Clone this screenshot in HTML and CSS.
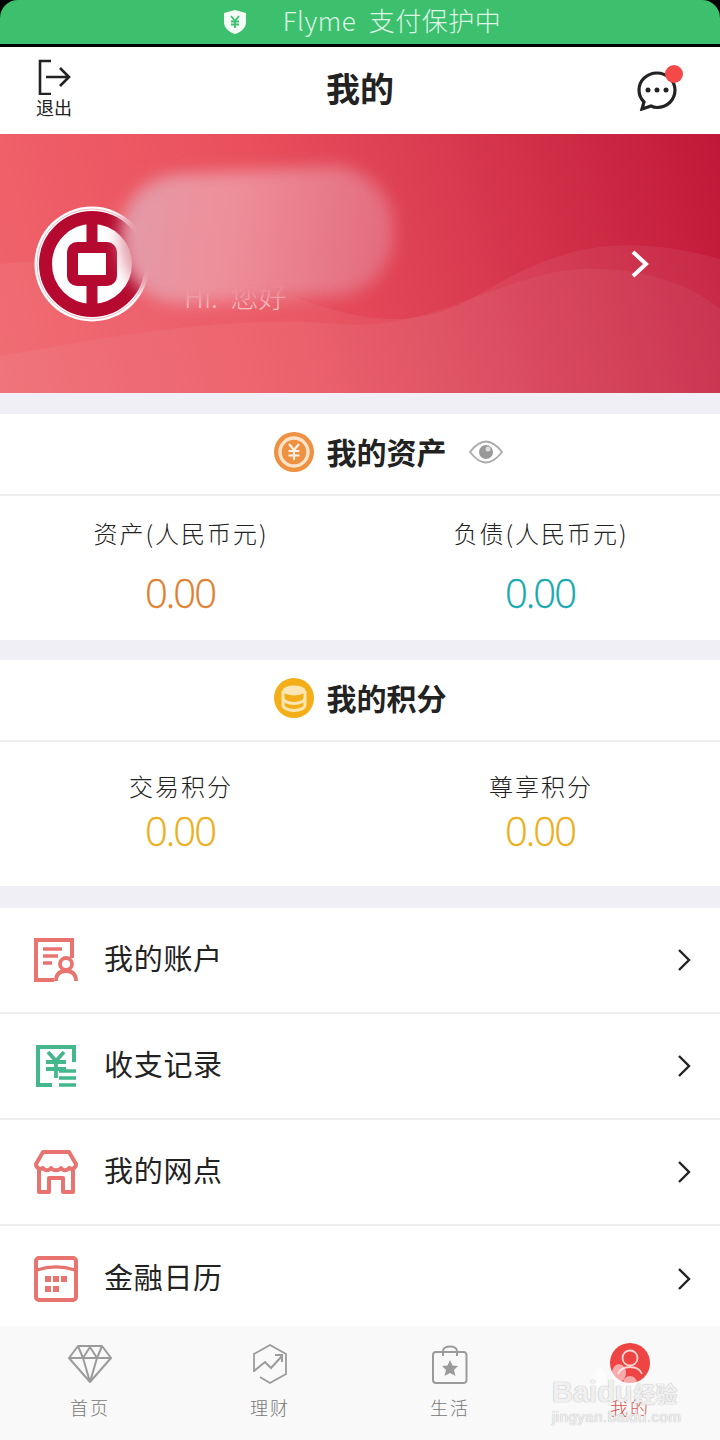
FILE: index.html
```html
<!DOCTYPE html>
<html lang="zh-CN">
<head>
<meta charset="UTF-8">
<title>我的</title>
<link rel="stylesheet" href="styles.css">
</head>
<body>
    <div class="page">
        <div class="pay-bar">
            <svg class="pay-shield" width="24" height="26" viewBox="0 0 24 26">
                <path d="M12 1 L23 4 V13 C23 19 18 23 12 25 C6 23 1 19 1 13 V4 Z" fill="#f4fbf6"/>
                <path d="M8 7 L12 12 L16 7 M12 12 V19 M8 12.5 H16 M8 15.5 H16" fill="none" stroke="#3cc06e" stroke-width="1.8"/>
            </svg>
            <span class="pay-text">Flyme&nbsp; 支付保护中</span>
        </div>

        <header class="top-bar">
            <div class="logout">
                <svg width="34" height="36" viewBox="0 0 34 36">
                    <path d="M14 2 H3 V35 H14" fill="none" stroke="#222" stroke-width="2.6"/>
                    <path d="M9 18 H31 M23 9 L32 18 L23 27" fill="none" stroke="#222" stroke-width="2.6"/>
                </svg>
                <span>退出</span>
            </div>
            <h1>我的</h1>
            <div class="msg">
                <svg width="40" height="42" viewBox="0 0 40 42">
                    <path d="M20 4 C9.500 4 2 12 2 21 C2 26 4 30 7 33 L5 40 L14 37 C16 38 18 38.500 20 38.500 C30 38.500 38 31 38 21 C38 12 30 4 20 4 Z" fill="none" stroke="#222" stroke-width="3.200"/>
                    <circle cx="11" cy="21" r="2.500" fill="#222"/>
                    <circle cx="20" cy="21" r="2.500" fill="#222"/>
                    <circle cx="29" cy="21" r="2.500" fill="#222"/>
                </svg>
                <i class="dot"></i>
            </div>
        </header>

        <section class="banner">
            <svg class="waves" width="720" height="259" viewBox="0 0 720 259" preserveAspectRatio="none">
                <path d="M0 130 C120 118 220 135 300 165 C370 190 420 195 480 160 C550 118 610 95 720 125 V259 H0 Z" fill="#fff" opacity="0.06"/>
                <path d="M0 222 C100 205 220 180 340 190 C430 198 500 140 580 135 C640 132 690 150 720 175 V259 H0 Z" fill="#fff" opacity="0.05"/>
            </svg>
            <svg class="logo" width="116" height="116" viewBox="0 0 116 116">
                <circle cx="58" cy="58" r="57.500" fill="#fff"/>
                <circle cx="58" cy="58" r="55" fill="none" stroke="#f3b8c0" stroke-width="1"/>
                <circle cx="58" cy="58" r="46.500" fill="none" stroke="#b5092f" stroke-width="13"/>
                <rect x="52.500" y="12" width="11" height="92" fill="#b5092f"/>
                <rect x="33" y="36" width="50" height="44" rx="10" fill="#b5092f"/>
                <rect x="44" y="47" width="28" height="22" fill="#fff"/>
            </svg>
            <span class="hello">Hi.&nbsp; 您好</span>
            <svg class="banner-arrow" width="20" height="30" viewBox="0 0 20 30">
                <path d="M3 3 L16 15 L3 27" fill="none" stroke="#fff" stroke-width="4"/>
            </svg>
            <div class="smudge"></div>
        </section>

        <section class="card">
            <div class="card-head">
                <svg width="40" height="40" viewBox="0 0 40 40">
                    <circle cx="20" cy="20" r="20" fill="#ee9140"/>
                    <circle cx="20" cy="20" r="14" fill="none" stroke="#fbe3cc" stroke-width="3.400"/>
                    <path d="M15 12 L20 18 L25 12 M20 18 V28 M14.500 19 H25.500 M14.500 23.500 H25.500" fill="none" stroke="#fdf3e9" stroke-width="2.200"/>
                </svg>
                <h2>我的资产</h2>
                <svg class="eye" width="34" height="24" viewBox="0 0 34 24">
                    <path d="M1 12 C8 3 13 1.500 17 1.500 C21 1.500 26 3 33 12 C26 21 21 22.500 17 22.500 C13 22.500 8 21 1 12 Z" fill="none" stroke="#aaa" stroke-width="1.800"/>
                    <circle cx="17" cy="12" r="7" fill="#999"/>
                    <circle cx="19" cy="9" r="2.500" fill="#ddd"/>
                </svg>
            </div>
            <div class="stats stats-assets">
                <div class="stat">
                    <span class="stat-label">资产(人民币元)</span>
                    <span class="stat-num orange">0.00</span>
                </div>
                <div class="stat">
                    <span class="stat-label">负债(人民币元)</span>
                    <span class="stat-num teal">0.00</span>
                </div>
            </div>
        </section>

        <section class="card">
            <div class="card-head">
                <svg width="40" height="40" viewBox="0 0 40 40">
                    <circle cx="20" cy="20" r="20" fill="#f4ae18"/>
                    <ellipse cx="20" cy="12.500" rx="11.500" ry="5" fill="#fbe6b4"/>
                    <path d="M9 13 V27 C9 30 14 32.500 20 32.500 C26 32.500 31 30 31 27 V13" fill="none" stroke="#fbe6b4" stroke-width="3"/>
                    <path d="M9 20 C9 23 14 25.500 20 25.500 C26 25.500 31 23 31 20" fill="none" stroke="#fbe6b4" stroke-width="3"/>
                </svg>
                <h2>我的积分</h2>
            </div>
            <div class="stats stats-points">
                <div class="stat">
                    <span class="stat-label">交易积分</span>
                    <span class="stat-num yellow">0.00</span>
                </div>
                <div class="stat">
                    <span class="stat-label">尊享积分</span>
                    <span class="stat-num yellow">0.00</span>
                </div>
            </div>
        </section>

        <ul class="menu">
            <li class="menu-row">
                <svg width="44" height="44" viewBox="0 0 44 44">
                    <path d="M20 42 H2 V2 H38 V20" fill="none" stroke="#e8736f" stroke-width="4"/>
                    <path d="M9 11 H28 M9 18 H24 M9 25 H18" fill="none" stroke="#e8736f" stroke-width="3.600"/>
                    <circle cx="32" cy="26" r="6" fill="none" stroke="#e8736f" stroke-width="3.800"/>
                    <path d="M22 43 C22 36 26 33 32 33 C38 33 42 36 42 43" fill="none" stroke="#e8736f" stroke-width="3.800"/>
                </svg>
                <span class="menu-text">我的账户</span>
                <svg class="chevron" width="14" height="24" viewBox="0 0 14 24"><path d="M2 2 L12 12 L2 22" fill="none" stroke="#222" stroke-width="2.400"/></svg>
            </li>
            <li class="menu-row">
                <svg width="44" height="44" viewBox="0 0 44 44">
                    <path d="M18 41 H4 V3 H40 V18" fill="none" stroke="#44b88c" stroke-width="4"/>
                    <path d="M14 8 L22 17 L30 8 M22 17 V34 M12 18 H32 M12 25 H32" fill="none" stroke="#44b88c" stroke-width="3.800"/>
                    <path d="M25 27 H42 M25 34 H42 M25 41 H42" fill="none" stroke="#44b88c" stroke-width="3.600"/>
                </svg>
                <span class="menu-text">收支记录</span>
                <svg class="chevron" width="14" height="24" viewBox="0 0 14 24"><path d="M2 2 L12 12 L2 22" fill="none" stroke="#222" stroke-width="2.400"/></svg>
            </li>
            <li class="menu-row">
                <svg width="44" height="44" viewBox="0 0 44 44">
                    <path d="M9 2 H35 L42 14 C42 18 38 20 35 18 C33 21 29 21 27 18 C25 21 19 21 17 18 C15 21 11 21 9 18 C6 20 2 18 2 14 Z" fill="none" stroke="#e8736f" stroke-width="4" stroke-linejoin="round"/>
                    <path d="M5 19 V42 H15 V28 H29 V42 H39 V19" fill="none" stroke="#e8736f" stroke-width="4" stroke-linejoin="round"/>
                </svg>
                <span class="menu-text">我的网点</span>
                <svg class="chevron" width="14" height="24" viewBox="0 0 14 24"><path d="M2 2 L12 12 L2 22" fill="none" stroke="#222" stroke-width="2.400"/></svg>
            </li>
            <li class="menu-row menu-row-last">
                <svg width="44" height="46" viewBox="0 0 44 46">
                    <rect x="2" y="2" width="40" height="42" rx="3" fill="none" stroke="#e8736f" stroke-width="4"/>
                    <path d="M3 14 C15 10 29 10 41 14" fill="none" stroke="#e8736f" stroke-width="3.400"/>
                    <path d="M11 20 h6 v6 h-6 z M19 20 h6 v6 h-6 z M27 20 h6 v6 h-6 z M11 30 h6 v6 h-6 z M19 30 h6 v6 h-6 z" fill="#e8736f"/>
                </svg>
                <span class="menu-text">金融日历</span>
                <svg class="chevron" width="14" height="24" viewBox="0 0 14 24"><path d="M2 2 L12 12 L2 22" fill="none" stroke="#222" stroke-width="2.400"/></svg>
            </li>
        </ul>

        <nav class="tabs">
            <div class="tab">
                <div class="tab-icon">
                    <svg width="44" height="40" viewBox="0 0 44 40">
                        <path d="M10 2 H34 L43 14 L22 38 L1 14 Z M1 14 H43 M10 2 L15 14 L22 38 L29 14 L34 2 M15 14 L22 3 L29 14" fill="none" stroke="#9b9b9b" stroke-width="2" stroke-linejoin="round"/>
                    </svg>
                </div>
                <span>首页</span>
            </div>
            <div class="tab">
                <div class="tab-icon">
                    <svg width="38" height="42" viewBox="0 0 38 42">
                        <path d="M3 29 V11 L19 2 L35 11 V31 L19 40 L9 34" fill="none" stroke="#9b9b9b" stroke-width="1.800"/>
                        <path d="M3 28 L14 19 L20 25 L31 13 M24 12 H31 V19" fill="none" stroke="#9b9b9b" stroke-width="2"/>
                    </svg>
                </div>
                <span>理财</span>
            </div>
            <div class="tab">
                <div class="tab-icon">
                    <svg width="38" height="42" viewBox="0 0 38 42">
                        <path d="M5 9 H33 C35 9 35 10 35.500 12 V37 C35.500 39 34 40 33 40 H5 C3 40 2 39 2 37 V12 C2 10 3 9 5 9 Z" fill="none" stroke="#9b9b9b" stroke-width="2"/>
                        <path d="M12 13 V8 C12 2 26 2 26 8 V13" fill="none" stroke="#9b9b9b" stroke-width="2"/>
                        <path d="M19 17 L21.500 22.500 L27 23 L23 27 L24.500 33 L19 30 L13.500 33 L15 27 L11 23 L16.500 22.500 Z" fill="#9b9b9b"/>
                    </svg>
                </div>
                <span>生活</span>
            </div>
            <div class="tab tab-active">
                <div class="tab-icon tab-icon-top">
                    <svg width="40" height="40" viewBox="0 0 40 40">
                        <circle cx="20" cy="20" r="20" fill="#ee4444"/>
                        <circle cx="20" cy="15" r="7.500" fill="none" stroke="#fbd4cf" stroke-width="1.800"/>
                        <path d="M8 31 C10 26 14 24 20 24 C26 24 30 26 32 31" fill="none" stroke="#fbd4cf" stroke-width="1.800"/>
                    </svg>
                </div>
                <span>我的</span>
            </div>
        </nav>

        <div class="watermark">
            <i class="wm-toe wm-toe-a"></i>
            <i class="wm-toe wm-toe-b"></i>
            <i class="wm-toe wm-toe-c"></i>
            <div class="wm-line"><span class="wm-brand">Baidu</span><span class="wm-cn">经验</span></div>
            <div class="wm-url">jingyan.baidu.com</div>
        </div>
    </div>
</body>
</html>
```

FILE: styles.css
```css
* {
    box-sizing: border-box;
}
body {
    margin: 0;
    background: #000;
    font-family: "Noto Sans CJK SC", "Noto Sans", sans-serif;
    color: #222;
}
.page {
    position: relative;
    width: 720px;
    height: 1440px;
    overflow: hidden;
    background: #f0eff5;
    display: flex;
    flex-direction: column;
}

/* top green strip */
.pay-bar {
    height: 47px;
    flex: none;
    background: #3cc06e;
    border-bottom: 3px solid #000;
    border-radius: 18px 18px 0 0;
    display: flex;
    align-items: center;
    justify-content: center;
    gap: 36px;
    padding-left: 4px;
    box-shadow: 0 0 0 20px #000;
}
.pay-text {
    color: #dff5e6;
    font-size: 26px;
    font-weight: 300;
    line-height: 44px;
    letter-spacing: 0.5px;
    margin-bottom: 4px;
}

.top-bar {
    height: 87px;
    flex: none;
    background: #fff;
    display: flex;
    align-items: center;
    justify-content: space-between;
    padding: 0 43px 0 35px;
    position: relative;
}
.top-bar h1 {
    position: absolute;
    left: 0;
    right: 0;
    top: 17px;
    margin: 0;
    font-size: 34px;
    line-height: 48px;
    font-weight: 700;
    text-align: center;
}
.logout {
    display: flex;
    flex-direction: column;
    align-items: center;
    width: 38px;
    margin-top: -4px;
}
.logout span {
    font-size: 18px;
    line-height: 24px;
}
.msg {
    position: relative;
    height: 42px;
    margin-top: -2px;
}
.dot {
    position: absolute;
    top: -4px;
    right: -6px;
    width: 18px;
    height: 18px;
    border-radius: 50%;
    background: #f54848;
}

.banner {
    position: relative;
    height: 259px;
    flex: none;
    overflow: hidden;
    background: linear-gradient(75deg, #f0646c 0%, #e94f5c 40%, #d93a50 65%, #c01838 100%);
    display: flex;
    align-items: center;
    padding: 0 70px 0 34px;
}
.waves {
    position: absolute;
    left: 0;
    top: 0;
}
.logo {
    position: relative;
    flex: none;
}
.hello {
    position: relative;
    margin: 64px 0 0 34px;
    color: #f8c9cd;
    font-size: 28px;
    font-weight: 300;
    line-height: 40px;
}
.banner-arrow {
    position: relative;
    margin-left: auto;
}
.smudge {
    position: absolute;
    left: 120px;
    top: 36px;
    width: 274px;
    height: 130px;
    border-radius: 62px;
    background: linear-gradient(100deg, #e29ba9 0%, #ee8f9a 40%, #e2687a 100%);
    filter: blur(8px);
    transform: rotate(-3deg);
}

.card {
    flex: none;
    margin-top: 21px;
    background: #fff;
}
.card + .card {
    margin-top: 20px;
}
.card-head {
    height: 82px;
    border-bottom: 2px solid #efefef;
    display: flex;
    align-items: center;
    justify-content: center;
    gap: 13px;
    padding-bottom: 4px;
}
.card-head h2 {
    margin: 0 0 2px;
    font-size: 30px;
    line-height: 44px;
    font-weight: 700;
}
.eye {
    margin: 0 -56px 0 9px;
}
.stats {
    display: grid;
    grid-template-columns: 1fr 1fr;
}
.stats-assets {
    height: 144px;
    padding-top: 19px;
}
.stats-points {
    height: 144px;
    padding-top: 26px;
}
.stat {
    display: flex;
    flex-direction: column;
    align-items: center;
}
.stat-label {
    font-size: 24px;
    line-height: 36px;
    font-weight: 300;
    letter-spacing: 2px;
    padding-left: 2px;
}
.stat-num {
    font-family: "Open Sans", sans-serif;
    font-size: 40px;
    font-weight: 300;
    letter-spacing: -2px;
    line-height: 48px;
    -webkit-text-stroke: 0.3px currentColor;
}
.stats-assets .stat-num {
    margin-top: 18px;
}
.stats-points .stat-num {
    margin-top: 3px;
}
.orange {
    color: #e0802e;
}
.teal {
    color: #14a9b0;
}
.yellow {
    color: #ecaf1a;
}

.menu {
    list-style: none;
    margin: 22px 0 0;
    padding: 0;
    background: #fff;
    flex: none;
}
.menu-row {
    height: 106px;
    border-bottom: 2px solid #efefef;
    display: flex;
    align-items: center;
    padding: 0 29px 0 34px;
    gap: 26px;
}
.menu-row-last {
    height: 100px;
    padding-top: 5px;
    border-bottom: none;
}
.menu-text {
    font-size: 29px;
    letter-spacing: 0.7px;
    line-height: 42px;
    margin-bottom: 6px;
}
.chevron {
    margin-left: auto;
}

.tabs {
    flex: 1;
    background: #f9f9f9;
    display: grid;
    grid-template-columns: repeat(4, 180px);
    padding-top: 17px;
}
.tab {
    display: flex;
    flex-direction: column;
    align-items: center;
    gap: 8px;
}
.tab-icon {
    height: 42px;
    display: flex;
    align-items: center;
}
.tab-icon-top {
    align-items: flex-start;
}
.tab span {
    font-size: 18px;
    line-height: 28px;
    font-weight: 300;
    letter-spacing: 2px;
    color: #777;
}
.tab-active span {
    color: #d9534f;
}

/* photo-style watermark laid over the tab bar */
.watermark {
    position: absolute;
    left: 552px;
    top: 1376px;
    color: rgba(255, 255, 255, 0.8);
    text-shadow: 0 0 1px #bbb, 0 0 1px #bbb;
}
.wm-toe {
    position: absolute;
    background: rgba(255, 255, 255, 0.55);
    border-radius: 50%;
}
.wm-toe-a {
    left: 41px;
    top: -7px;
    width: 14px;
    height: 18px;
}
.wm-toe-b {
    left: 60px;
    top: -12px;
    width: 14px;
    height: 18px;
}
.wm-toe-c {
    left: 71px;
    top: 0;
    width: 14px;
    height: 14px;
}
.wm-line {
    position: relative;
    display: flex;
    align-items: center;
    height: 32px;
}
.wm-brand {
    font-family: "Liberation Sans", sans-serif;
    font-size: 29px;
    font-weight: 700;
    line-height: 32px;
}
.wm-cn {
    font-size: 22px;
    font-weight: 700;
    margin-left: 1px;
}
.wm-url {
    position: relative;
    font-family: "Liberation Sans", sans-serif;
    font-size: 15px;
    line-height: 20px;
    letter-spacing: 0.5px;
    margin-top: -1px;
}
```
